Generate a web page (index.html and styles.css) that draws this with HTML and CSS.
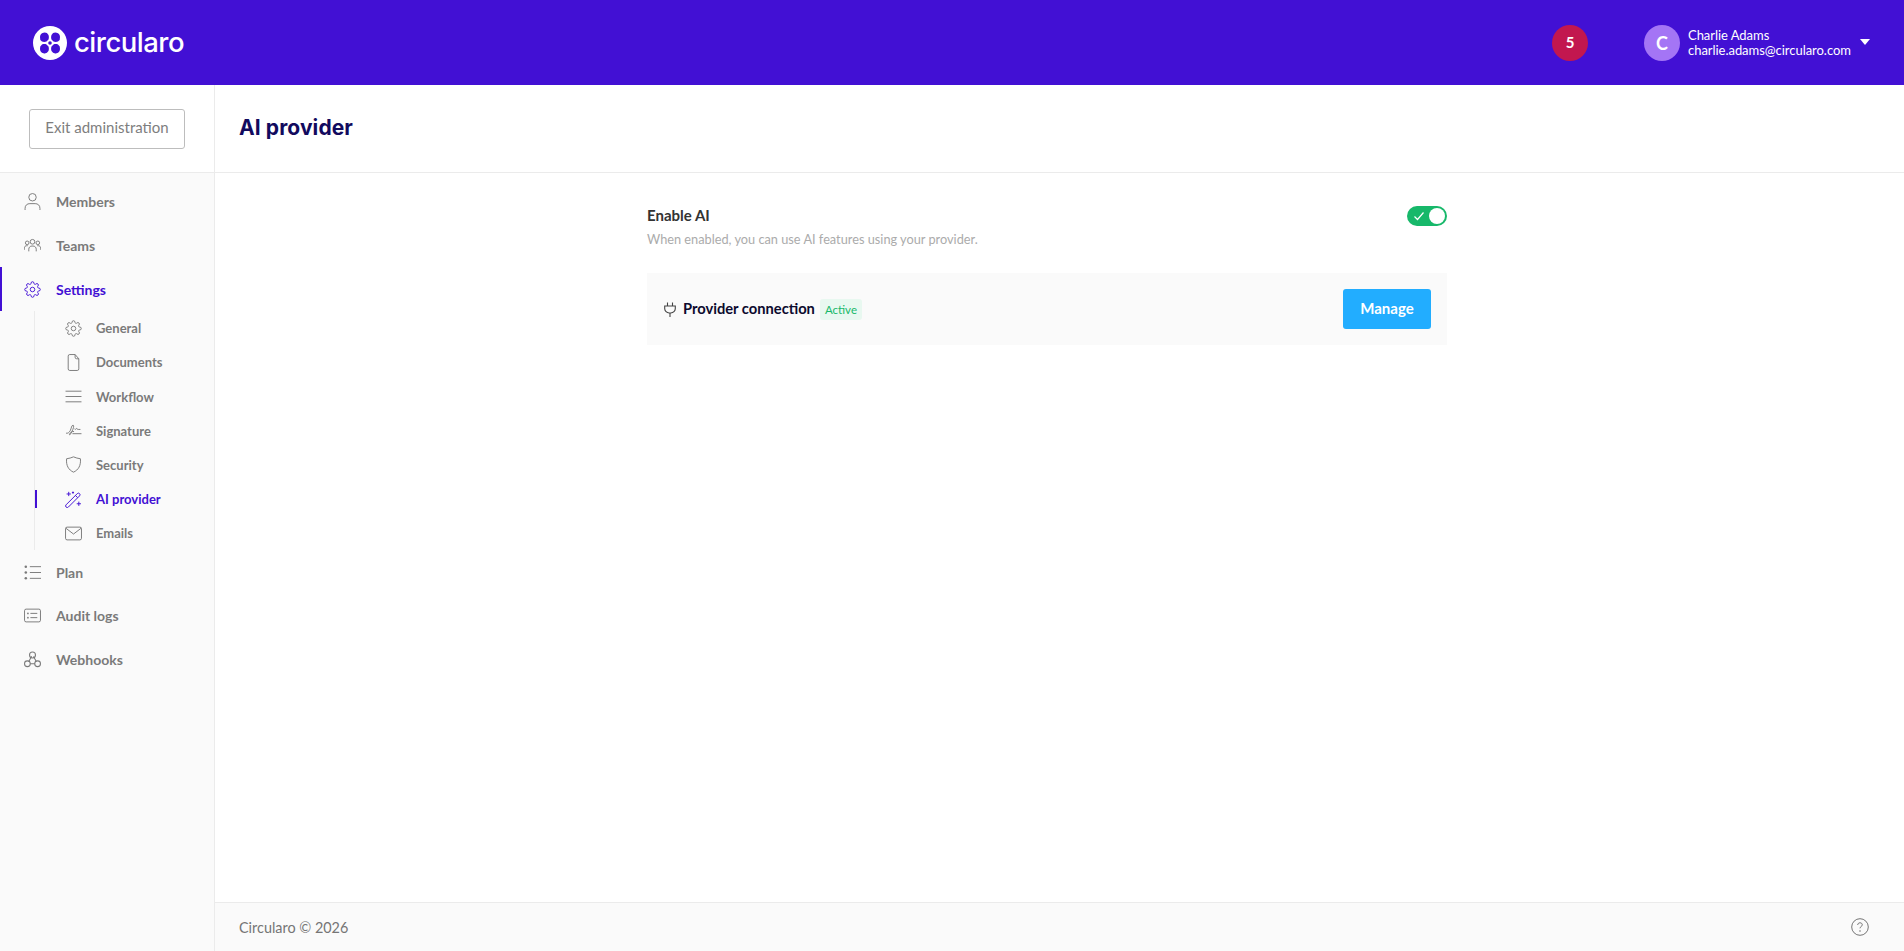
FILE: index.html
```html
<!DOCTYPE html>
<html lang="en">
<head>
    <meta charset="UTF-8">
    <title>AI provider</title>
    <link rel="stylesheet" href="styles.css">
</head>
<body>
    <header class="topBar">
        <div class="brand">
            <svg class="brandMark" viewBox="0 0 34 34">
                <circle cx="17" cy="17" r="17" fill="#fff"/>
                <g fill="#4210d4">
                    <path d="M7 11a4.500 4.500 0 0 1 8.500-2c.6 1.500.4 3.500 0 4.500L13.500 15.500c-1 .4-3 .6-4.500 0A4.500 4.500 0 0 1 7 11z"/>
                    <path d="M27 11a4.500 4.500 0 0 0-8.500-2c-.6 1.500-.4 3.500 0 4.500l2 2c1 .4 3 .6 4.500 0A4.500 4.500 0 0 0 27 11z"/>
                    <path d="M7 23a4.500 4.500 0 0 0 8.500 2c.6-1.500.4-3.500 0-4.500l-2-2c-1-.4-3-.6-4.500 0A4.500 4.500 0 0 0 7 23z"/>
                    <path d="M27 23a4.500 4.500 0 0 1-8.500 2c-.6-1.500-.4-3.500 0-4.500l2-2c1-.4 3-.6 4.500 0A4.500 4.500 0 0 1 27 23z"/>
                    <circle cx="17" cy="17" r="1.800"/>
                </g>
            </svg>
            <span class="brandName">circularo</span>
        </div>
        <div class="topRight">
            <div class="badgeCount">5</div>
            <div class="userBox">
                <div class="avatar">C</div>
                <div class="userText">
                    <div>Charlie Adams</div>
                    <div>charlie.adams@circularo.com</div>
                </div>
                <span class="caret"></span>
            </div>
        </div>
    </header>

    <div class="pageBody">
        <aside class="sidebar">
            <div class="sideTop">
                <div class="exitButton">Exit administration</div>
            </div>
            <nav class="sideNav">
                <div class="navItem">
                    <svg class="icon" viewBox="0 0 16 16"><circle cx="8" cy="4" r="3.500"/><path d="M1 16v-1.500c0-3 2-4.500 4.500-4.500h5c2.500 0 4.500 1.500 4.500 4.500V16"/></svg>
                    <span>Members</span>
                </div>
                <div class="navItem">
                    <svg class="icon" viewBox="0 0 16 16"><circle cx="8" cy="4.500" r="2.200"/><circle cx="3" cy="5.500" r="1.700"/><circle cx="13" cy="5.500" r="1.700"/><path d="M4.500 13.500v-2c0-1.800 1.300-3 3-3h1c1.700 0 3 1.200 3 3v2M.3 12v-1.500c0-1.300.9-2.300 2.200-2.300h1M15.700 12v-1.500c0-1.300-.9-2.300-2.200-2.300h-1"/></svg>
                    <span>Teams</span>
                </div>
                <div class="navItem navActive">
                    <svg class="icon" viewBox="0 0 24 24"><circle cx="12" cy="12" r="3.200"/><path class="gearPath" d="M19.400 15a1.650 1.650 0 0 0 .33 1.820l.06.06a2 2 0 0 1 0 2.830 2 2 0 0 1-2.830 0l-.06-.06a1.650 1.650 0 0 0-1.820-.33 1.650 1.650 0 0 0-1 1.510V21a2 2 0 0 1-2 2 2 2 0 0 1-2-2v-.09A1.650 1.650 0 0 0 9 19.400a1.650 1.650 0 0 0-1.820.33l-.06.06a2 2 0 0 1-2.830 0 2 2 0 0 1 0-2.830l.06-.06a1.650 1.650 0 0 0 .33-1.820 1.650 1.650 0 0 0-1.510-1H3a2 2 0 0 1-2-2 2 2 0 0 1 2-2h.09A1.650 1.650 0 0 0 4.600 9a1.650 1.650 0 0 0-.33-1.820l-.06-.06a2 2 0 0 1 0-2.830 2 2 0 0 1 2.830 0l.06.06a1.650 1.650 0 0 0 1.820.33H9a1.650 1.650 0 0 0 1-1.510V3a2 2 0 0 1 2-2 2 2 0 0 1 2 2v.09a1.650 1.650 0 0 0 1 1.510 1.650 1.650 0 0 0 1.820-.33l.06-.06a2 2 0 0 1 2.830 0 2 2 0 0 1 0 2.830l-.06.06a1.650 1.650 0 0 0-.33 1.820V9a1.650 1.650 0 0 0 1.510 1H21a2 2 0 0 1 2 2 2 2 0 0 1-2 2h-.09a1.650 1.650 0 0 0-1.510 1z"/></svg>
                    <span>Settings</span>
                </div>
                <div class="subNav">
                    <div class="subItem">
                        <svg class="icon gearIcon" viewBox="0 0 24 24"><circle cx="12" cy="12" r="3.200"/><path d="M19.400 15a1.650 1.650 0 0 0 .33 1.820l.06.06a2 2 0 0 1 0 2.830 2 2 0 0 1-2.830 0l-.06-.06a1.650 1.650 0 0 0-1.820-.33 1.650 1.650 0 0 0-1 1.510V21a2 2 0 0 1-2 2 2 2 0 0 1-2-2v-.09A1.650 1.650 0 0 0 9 19.400a1.650 1.650 0 0 0-1.820.33l-.06.06a2 2 0 0 1-2.830 0 2 2 0 0 1 0-2.830l.06-.06a1.650 1.650 0 0 0 .33-1.820 1.650 1.650 0 0 0-1.510-1H3a2 2 0 0 1-2-2 2 2 0 0 1 2-2h.09A1.650 1.650 0 0 0 4.600 9a1.650 1.650 0 0 0-.33-1.820l-.06-.06a2 2 0 0 1 0-2.830 2 2 0 0 1 2.830 0l.06.06a1.650 1.650 0 0 0 1.820.33H9a1.650 1.650 0 0 0 1-1.510V3a2 2 0 0 1 2-2 2 2 0 0 1 2 2v.09a1.650 1.650 0 0 0 1 1.510 1.650 1.650 0 0 0 1.820-.33l.06-.06a2 2 0 0 1 2.830 0 2 2 0 0 1 0 2.830l-.06.06a1.650 1.650 0 0 0-.33 1.820V9a1.650 1.650 0 0 0 1.510 1H21a2 2 0 0 1 2 2 2 2 0 0 1-2 2h-.09a1.650 1.650 0 0 0-1.510 1z"/></svg>
                        <span>General</span>
                    </div>
                    <div class="subItem">
                        <svg class="icon" viewBox="0 0 16 16"><path d="M9.500.5H4.500a1.500 1.500 0 0 0-1.500 1.500v12a1.500 1.500 0 0 0 1.500 1.500h7a1.500 1.500 0 0 0 1.500-1.500V4.500zM9.500.5v2.500a1.500 1.500 0 0 0 1.500 1.500h2"/></svg>
                        <span>Documents</span>
                    </div>
                    <div class="subItem">
                        <svg class="icon" viewBox="0 0 16 16"><path d="M.5 3h15M.5 8h15M.5 13h15"/></svg>
                        <span>Workflow</span>
                    </div>
                    <div class="subItem">
                        <svg class="icon" viewBox="0 0 16 16"><path d="M1 10.500c1.500.4 3-.5 4-2.500s1.200-5 2.500-5S8 6 6.500 9 4 13 4.300 11.500 7 8.500 8.500 9M9 6.500c.6 1 1.500 0 2-.5s.3 1.500 1.500 1h2M7 11h8.500"/></svg>
                        <span>Signature</span>
                    </div>
                    <div class="subItem">
                        <svg class="icon" viewBox="0 0 16 16"><path d="M8 .8c2 .9 4.200 1.500 6.500 1.800.6 6.300-1.800 10.500-6.500 12.600C3.300 13.100.9 8.900 1.500 2.600 3.800 2.300 6 1.700 8 .8z"/></svg>
                        <span>Security</span>
                    </div>
                    <div class="subItem subActive">
                        <svg class="icon" viewBox="0 0 16 16"><path d="M1 13 11.500 2.500a1.500 1.500 0 0 1 2.200 2.100L3.200 15.100a1.500 1.500 0 0 1-2.200-2.100zM9.800 4.200l2.100 2.100M3.500 .8v4M1.500 2.800h4M7.500.5v2M6.500 1.500h2M13 10v4M11 12h4"/></svg>
                        <span>AI provider</span>
                    </div>
                    <div class="subItem">
                        <svg class="icon" viewBox="0 0 16 16"><rect x=".5" y="2" width="15" height="12" rx="1.500"/><path d="M.8 3 8 8.500 15.200 3"/></svg>
                        <span>Emails</span>
                    </div>
                </div>
                <div class="navItem">
                    <svg class="icon" viewBox="0 0 16 16"><path d="M5.500 2.500h10.500M5.500 8h10.500M5.500 13.500h10.500"/><g class="iconDots"><circle cx="1.700" cy="2.500" r="1.200"/><circle cx="1.700" cy="8" r="1.200"/><circle cx="1.700" cy="13.500" r="1.200"/></g></svg>
                    <span>Plan</span>
                </div>
                <div class="navItem">
                    <svg class="icon" viewBox="0 0 16 16"><rect x=".5" y="2" width="15" height="12" rx="1.500"/><path d="M6 6h6.500M6 10h6.500"/><g class="iconDots"><circle cx="3.700" cy="6" r=".8"/><circle cx="3.700" cy="10" r=".8"/></g></svg>
                    <span>Audit logs</span>
                </div>
                <div class="navItem">
                    <svg class="icon hookIcon" viewBox="0 0 16 16"><circle cx="8" cy="3.800" r="2.800"/><circle cx="3.200" cy="12" r="2.700"/><circle cx="12.800" cy="12" r="2.700"/><path d="M7.200 5 4.400 10.200M8.900 5.200 11.600 9.800M5.800 12h4.500"/></svg>
                    <span>Webhooks</span>
                </div>
            </nav>
        </aside>

        <main class="mainArea">
            <div class="pageHead">
                <h1 class="pageTitle">AI provider</h1>
            </div>
            <div class="pageContent">
                <div class="settingsColumn">
                    <div class="settingRow">
                        <div>
                            <div class="settingLabel">Enable AI</div>
                            <div class="settingHint">When enabled, you can use AI features using your provider.</div>
                        </div>
                        <div class="toggle">
                            <svg class="toggleCheck" viewBox="0 0 12 12"><path d="M1.500 6.500 4.500 9.500 10.500 2.500"/></svg>
                            <span class="toggleKnob"></span>
                        </div>
                    </div>
                    <div class="providerPanel">
                        <div class="providerName">
                            <svg class="plugIcon" viewBox="0 0 12 15"><path d="M3.500 .5v3.500M8.500 .5v3.500M.7 4h10.600v2.500a4.500 4.500 0 0 1-4.500 4.500H5.200a4.500 4.500 0 0 1-4.500-4.500zM6 11v4"/></svg>
                            <span class="providerText">Provider connection</span>
                            <span class="activeTag">Active</span>
                        </div>
                        <div class="manageButton">Manage</div>
                    </div>
                </div>
            </div>
            <footer class="pageFoot">
                <span>Circularo © 2026</span>
                <svg class="helpIcon" viewBox="0 0 18 18"><circle cx="9" cy="9" r="8.300"/><path d="M6.700 7c0-1.400 1-2.200 2.300-2.200s2.300.8 2.300 2c0 1.700-2.300 1.700-2.300 3.500"/><circle class="helpDot" cx="9" cy="13" r=".8"/></svg>
            </footer>
        </main>
    </div>
</body>
</html>
```

FILE: styles.css
```css
* {
    box-sizing: border-box;
}

body {
    margin: 0;
    height: 951px;
    overflow: hidden;
    display: flex;
    flex-direction: column;
    font-family: 'Lato', 'Noto Sans', sans-serif;
    background-color: white;
}

.topBar {
    height: 85px;
    flex: none;
    background-color: #4210D4;
    color: white;
    display: flex;
    justify-content: space-between;
    align-items: center;
    padding-left: 33px;
    padding-right: 34px;
}

.brand {
    display: flex;
    align-items: center;
    gap: 7px;
}

.brandMark {
    width: 34px;
    height: 34px;
}

.brandName {
    font-family: 'Inter', sans-serif;
    font-size: 27.500px;
    font-weight: 500;
    letter-spacing: -0.5px;
    padding-bottom: 2px;
}

.topRight {
    display: flex;
    align-items: center;
    gap: 56px;
}

.badgeCount {
    width: 36px;
    height: 36px;
    border-radius: 50%;
    background-color: #C2174F;
    font-size: 15px;
    font-weight: 700;
    padding-bottom: 2px;
    display: flex;
    align-items: center;
    justify-content: center;
}

.userBox {
    display: flex;
    align-items: center;
}

.avatar {
    width: 36px;
    height: 36px;
    border-radius: 50%;
    background-color: #A475F5;
    font-size: 18px;
    font-weight: 700;
    display: flex;
    align-items: center;
    justify-content: center;
    margin-right: 8px;
}

.userText {
    width: 162px;
    font-size: 13px;
    letter-spacing: -0.04px;
    line-height: 15px;
    white-space: nowrap;
}

.caret {
    width: 0;
    height: 0;
    margin-left: 10px;
    margin-bottom: 2px;
    border-left: 5px solid transparent;
    border-right: 5px solid transparent;
    border-top: 6px solid white;
}

.pageBody {
    flex: 1;
    display: flex;
    min-height: 0;
}

.sidebar {
    width: 215px;
    flex: none;
    background-color: #FAFAFA;
    border-right: 1px solid #EBEBEB;
}

.sideTop {
    height: 88px;
    background-color: white;
    border-bottom: 1px solid #EBEBEB;
    padding-top: 24px;
    padding-left: 29px;
}

.exitButton {
    width: 156px;
    height: 40px;
    border: 1px solid #BDBDBD;
    border-radius: 3px;
    color: #7E7E7E;
    font-size: 15px;
    padding-bottom: 5px;
    display: flex;
    align-items: center;
    justify-content: center;
}

.sideNav {
    padding-top: 7px;
}

.navItem {
    height: 43.700px;
    display: flex;
    align-items: center;
    padding-left: 24px;
    gap: 15px;
    color: #7A7A7A;
    font-size: 14px;
    font-weight: 700;
}

.icon {
    width: 17px;
    height: 17px;
    fill: none;
    stroke: #7A7A7A;
    stroke-width: 0.9;
    flex: none;
}

.gearIcon,
.navActive .icon {
    stroke-width: 1.300;
}

.hookIcon {
    stroke-width: 1;
}

.iconDots {
    fill: #7A7A7A;
    stroke: none;
}

.navActive {
    color: #4210D4;
    border-left: 2px solid #4210D4;
    padding-left: 22px;
}

.navActive .icon {
    stroke: #4210D4;
}

.subNav {
    margin-left: 34px;
    border-left: 1px solid #EBEBEB;
}

.subItem {
    height: 34.200px;
    display: flex;
    align-items: center;
    padding-left: 30px;
    gap: 14px;
    color: #7A7A7A;
    font-size: 13px;
    font-weight: 700;
}

.subActive {
    color: #4210D4;
    position: relative;
}

.subActive .icon {
    stroke: #4210D4;
}

.subActive::before {
    content: "";
    position: absolute;
    left: 0;
    top: 8px;
    width: 2px;
    height: 18px;
    background-color: #4210D4;
}

.mainArea {
    flex: 1;
    display: flex;
    flex-direction: column;
    min-width: 0;
}

.pageHead {
    height: 88px;
    flex: none;
    border-bottom: 1px solid #EBEBEB;
    display: flex;
    align-items: center;
    padding-left: 24px;
}

.pageTitle {
    margin: 0;
    margin-bottom: 3px;
    font-family: 'Inter', sans-serif;
    font-size: 21px;
    font-weight: 700;
    letter-spacing: 0.1px;
    color: #120A5E;
}

.pageContent {
    flex: 1;
    display: flex;
    justify-content: center;
    padding-top: 30px;
    padding-right: 25px;
}

.settingsColumn {
    width: 800px;
}

.settingRow {
    display: flex;
    justify-content: space-between;
    height: 70px;
}

.settingLabel {
    font-size: 15px;
    font-weight: 700;
    color: #333333;
    line-height: 24px;
}

.settingHint {
    margin-top: 2px;
    font-size: 12.750px;
    color: #ABABAB;
    line-height: 20px;
}

.toggle {
    width: 40px;
    height: 20px;
    margin-top: 3px;
    border-radius: 10px;
    background-color: #17B86A;
    display: flex;
    align-items: center;
    justify-content: space-between;
    padding-left: 6px;
    padding-right: 2px;
}

.toggleCheck {
    width: 12px;
    height: 12px;
    fill: none;
    stroke: white;
    stroke-width: 1.200;
}

.toggleKnob {
    width: 16px;
    height: 16px;
    border-radius: 50%;
    background-color: white;
}

.providerPanel {
    height: 72px;
    background-color: #FAFAFA;
    display: flex;
    align-items: center;
    justify-content: space-between;
    padding-left: 17px;
    padding-right: 16px;
}

.providerName {
    display: flex;
    align-items: center;
}

.plugIcon {
    width: 12px;
    height: 15px;
    margin-right: 7px;
    fill: none;
    stroke: #444444;
    stroke-width: 1.100;
}

.providerText {
    font-size: 14.700px;
    font-weight: 700;
    padding-bottom: 2px;
    color: #0C0A2E;
}

.activeTag {
    margin-left: 5px;
    padding: 0 5px;
    height: 21px;
    line-height: 21px;
    border-radius: 3px;
    background-color: #E8F8F0;
    color: #17B86A;
    font-size: 11.500px;
}

.manageButton {
    width: 88px;
    height: 40px;
    border-radius: 3px;
    background-color: #22ADFF;
    color: white;
    font-size: 15px;
    font-weight: 700;
    padding-bottom: 2px;
    display: flex;
    align-items: center;
    justify-content: center;
}

.pageFoot {
    height: 49px;
    flex: none;
    background-color: #FAFAFA;
    border-top: 1px solid #EBEBEB;
    display: flex;
    align-items: center;
    justify-content: space-between;
    padding-left: 24px;
    padding-right: 35px;
    color: #757575;
    font-size: 14.400px;
}

.helpIcon {
    width: 18px;
    height: 18px;
    fill: none;
    stroke: #757575;
    stroke-width: 1;
}

.helpDot {
    fill: #757575;
    stroke: none;
}
```
